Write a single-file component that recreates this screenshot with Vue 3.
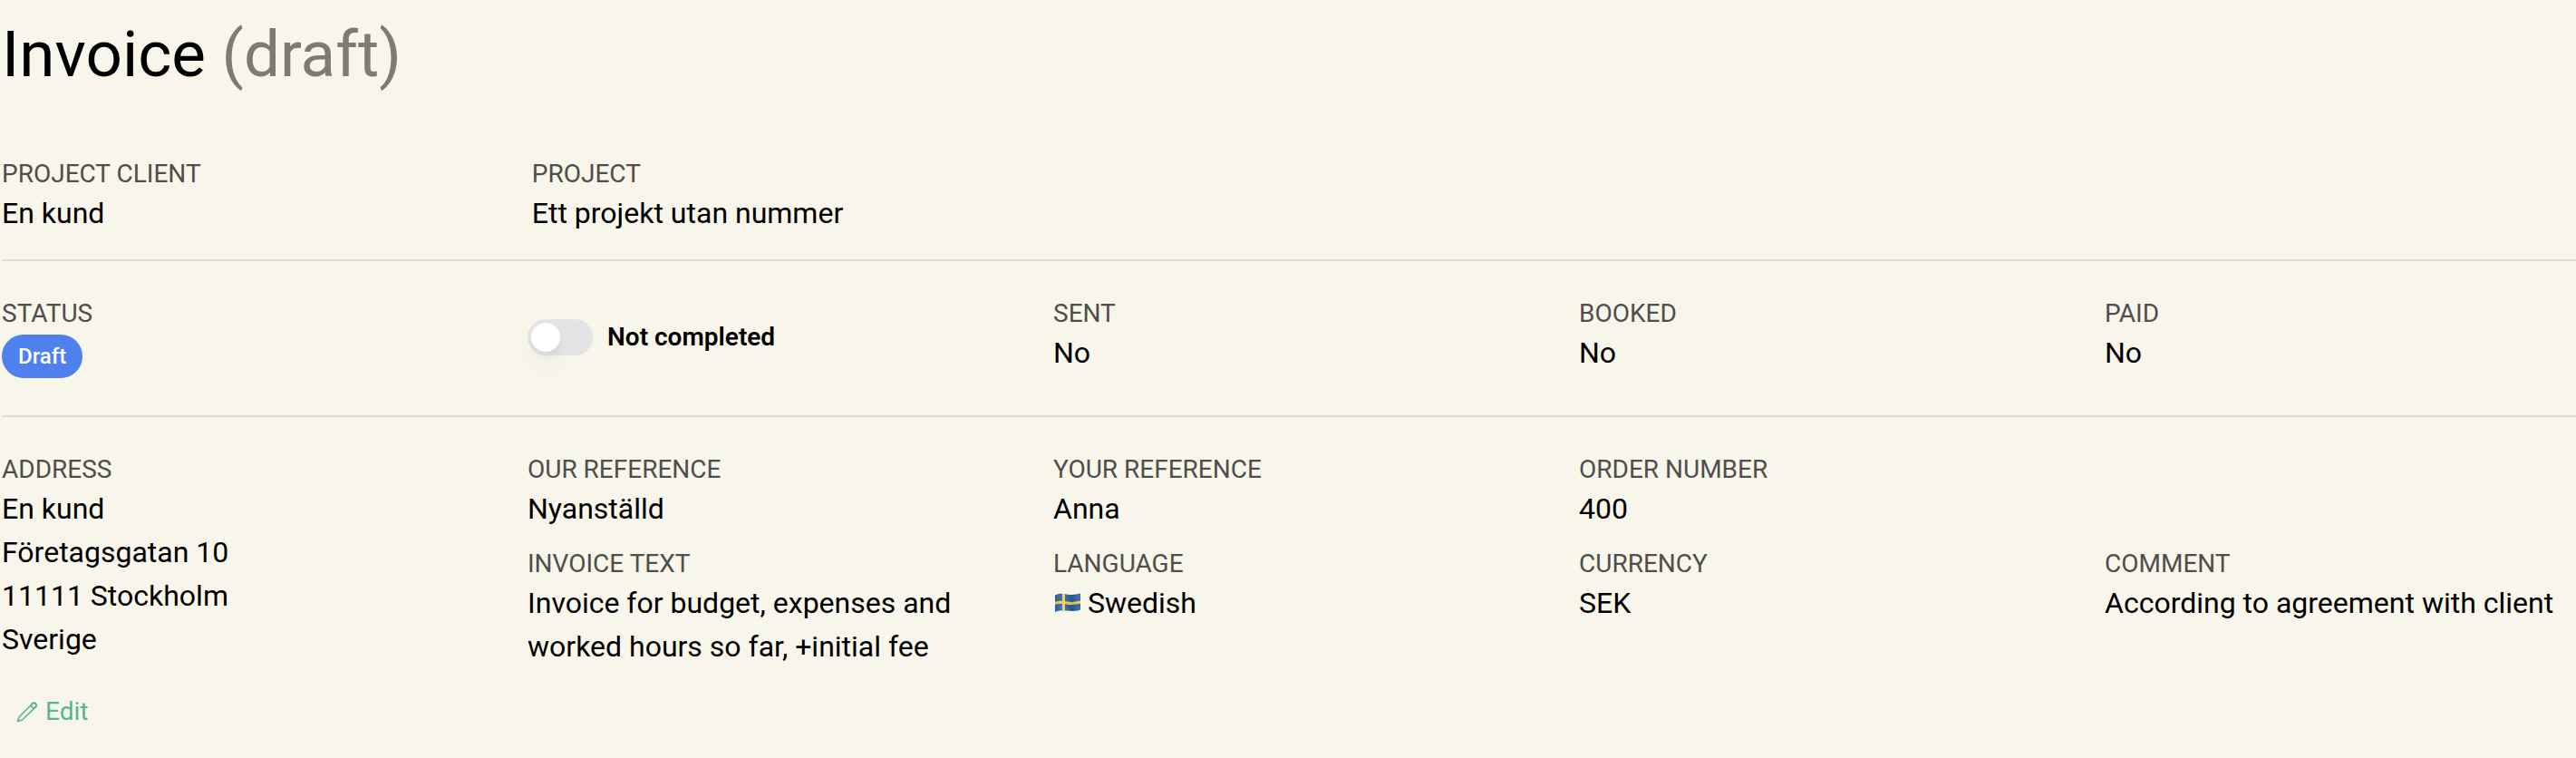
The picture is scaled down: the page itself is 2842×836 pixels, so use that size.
<script setup>
import { ref } from 'vue'

const completed = ref(false)
const states = [
  { label: 'Sent', value: 'No' },
  { label: 'Booked', value: 'No' },
  { label: 'Paid', value: 'No' },
]
</script>

<template>
  <main class="invoice">
    <h1 class="title">Invoice <span class="title-state">(draft)</span></h1>

    <dl class="row project">
      <div class="field">
        <dt>Project client</dt>
        <dd>En kund</dd>
      </div>
      <div class="field">
        <dt>Project</dt>
        <dd>Ett projekt utan nummer</dd>
      </div>
    </dl>

    <section class="row status">
      <dl class="field">
        <dt>Status</dt>
        <dd class="badge-line"><span class="badge">Draft</span></dd>
      </dl>
      <label class="toggle">
        <input v-model="completed" type="checkbox" role="switch" class="switch" />
        <span>{{ completed ? 'Completed' : 'Not completed' }}</span>
      </label>
      <dl v-for="state in states" :key="state.label" class="field">
        <dt>{{ state.label }}</dt>
        <dd>{{ state.value }}</dd>
      </dl>
    </section>

    <dl class="row details">
      <div class="field address">
        <dt>Address</dt>
        <dd>En kund<br />Företagsgatan 10<br />11111 Stockholm<br />Sverige</dd>
      </div>
      <div class="field">
        <dt>Our reference</dt>
        <dd>Nyanställd</dd>
      </div>
      <div class="field">
        <dt>Your reference</dt>
        <dd>Anna</dd>
      </div>
      <div class="field order">
        <dt>Order number</dt>
        <dd>400</dd>
      </div>
      <div class="field">
        <dt>Invoice text</dt>
        <dd>Invoice for budget, expenses and worked hours so far, +initial fee</dd>
      </div>
      <div class="field">
        <dt>Language</dt>
        <dd class="language">
          <svg class="flag" viewBox="0 0 30 24" aria-hidden="true">
            <defs>
              <clipPath id="flag-shape">
                <path d="M2 3.500 C6 1 10 1.500 15 2.500 S25 3 30 1.500 V19.500 C25 21.500 20 21 15 20.500 S6 20 2 22 Z" />
              </clipPath>
              <linearGradient id="flag-shade">
                <stop offset="0" stop-color="#000" stop-opacity=".12" />
                <stop offset=".3" stop-color="#fff" stop-opacity=".12" />
                <stop offset=".7" stop-color="#000" stop-opacity=".14" />
                <stop offset="1" stop-color="#fff" stop-opacity=".08" />
              </linearGradient>
            </defs>
            <g clip-path="url(#flag-shape)">
              <rect width="30" height="24" fill="#2b63a6" />
              <path d="M11.500 0 V24 M0 13 C6 10.500 10 11 15 12 S25 12.500 30 11" fill="none" stroke="#f8d548" stroke-width="3" />
              <rect width="30" height="24" fill="url(#flag-shade)" />
            </g>
          </svg>
          <span>Swedish</span>
        </dd>
      </div>
      <div class="field">
        <dt>Currency</dt>
        <dd>SEK</dd>
      </div>
      <div class="field">
        <dt>Comment</dt>
        <dd>According to agreement with client</dd>
      </div>
    </dl>

    <button type="button" class="edit">
      <svg class="pencil" viewBox="0 0 24 24" aria-hidden="true">
        <path d="M1.500 22.500 L3.300 17.600 L17.600 3.300 A2.200 2.200 0 0 1 21.700 6.400 L6.600 21 Z" />
        <circle cx="19.200" cy="5" r="2.700" />
      </svg>
      <span>Edit</span>
    </button>
  </main>
</template>

<style>
body {
  background: #f8f5ea;
}
</style>

<style scoped>
.invoice {
  padding: 18px 0 0 2px;
  color: #000;
  font-family: Roboto, "Liberation Sans", sans-serif;
  font-size: 32px;
  line-height: 48px;
}

.title {
  margin: 0 0 71px;
  font-size: 71px;
  font-weight: 400;
  line-height: 84px;
}

.title-state {
  color: #7c7b75;
}

.row {
  display: grid;
  grid-template-columns: repeat(5, minmax(0, 1fr));
  column-gap: 60px;
  margin: 0;
}

.project {
  column-gap: 84px;
  padding-bottom: 27px;
  border-bottom: 2px solid #dfdcd2;
}

.status {
  padding: 39px 0 41px;
  border-bottom: 2px solid #dfdcd2;
}

.details {
  row-gap: 18px;
  padding-top: 39px;
}

.field {
  margin: 0;
}

.address {
  grid-row: span 2;
}

.order {
  grid-column: span 2;
}

dt {
  color: #4f4e4b;
  font-size: 28px;
  line-height: 38px;
  text-transform: uppercase;
}

dd {
  margin: 0;
}

.badge-line {
  display: flex;
  padding-top: 4px;
}

.badge {
  padding: 0 18px;
  border-radius: 24px;
  background: #4e81ee;
  color: #fff;
  font-size: 24px;
  font-weight: 500;
}

.toggle {
  display: flex;
  align-items: center;
  gap: 16px;
  font-size: 28px;
  font-weight: 600;
}

.switch {
  display: flex;
  flex: none;
  width: 72px;
  height: 40px;
  margin: 0;
  padding: 4px;
  border-radius: 20px;
  background: #e4e4e4;
  appearance: none;
}

.switch::before {
  width: 32px;
  height: 32px;
  border-radius: 50%;
  background: #fff;
  box-shadow: 0 20px 26px rgba(0, 0, 0, 0.03), 0 6px 10px rgba(0, 0, 0, 0.04);
  content: "";
}

.switch:checked {
  justify-content: flex-end;
  background: #56b592;
}

.language {
  display: flex;
  align-items: center;
  gap: 8px;
}

.flag {
  width: 30px;
  height: 24px;
}

.edit {
  display: flex;
  align-items: center;
  gap: 8px;
  margin-top: 24px;
  padding: 0 16px;
  border: 0;
  background: none;
  color: #56b592;
  font: inherit;
  font-size: 28px;
}

.pencil {
  width: 24px;
  height: 24px;
  fill: none;
  stroke: currentColor;
  stroke-linejoin: round;
  stroke-width: 1.5;
}
</style>
